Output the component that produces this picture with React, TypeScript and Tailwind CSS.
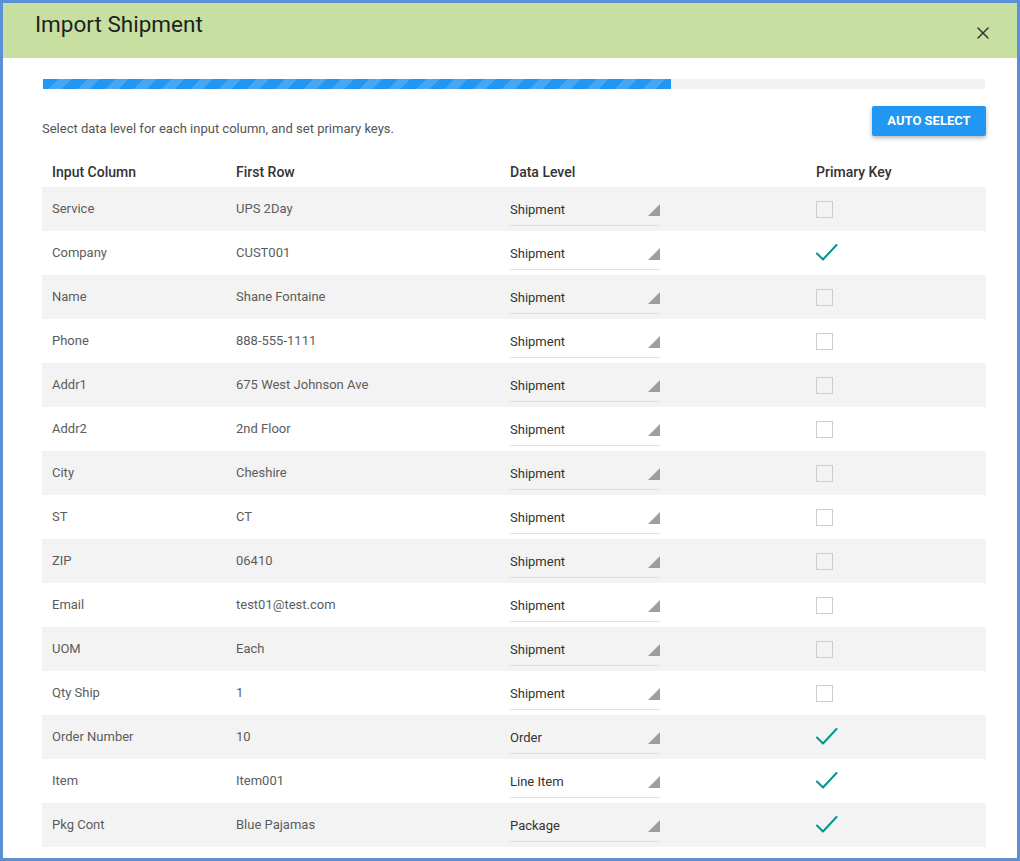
import { X } from "lucide-react";

const rows = [
  { col: "Service", first: "UPS 2Day", level: "Shipment", key: false },
  { col: "Company", first: "CUST001", level: "Shipment", key: true },
  { col: "Name", first: "Shane Fontaine", level: "Shipment", key: false },
  { col: "Phone", first: "888-555-1111", level: "Shipment", key: false },
  { col: "Addr1", first: "675 West Johnson Ave", level: "Shipment", key: false },
  { col: "Addr2", first: "2nd Floor", level: "Shipment", key: false },
  { col: "City", first: "Cheshire", level: "Shipment", key: false },
  { col: "ST", first: "CT", level: "Shipment", key: false },
  { col: "ZIP", first: "06410", level: "Shipment", key: false },
  { col: "Email", first: "test01@test.com", level: "Shipment", key: false },
  { col: "UOM", first: "Each", level: "Shipment", key: false },
  { col: "Qty Ship", first: "1", level: "Shipment", key: false },
  { col: "Order Number", first: "10", level: "Order", key: true },
  { col: "Item", first: "Item001", level: "Line Item", key: true },
  { col: "Pkg Cont", first: "Blue Pajamas", level: "Package", key: true },
];

function Check() {
  return (
    <svg width="22" height="20" viewBox="0 0 22 20" fill="none">
      <path d="M1 10.5 L7 16.5 L20.5 2" stroke="#00968a" strokeWidth="2" strokeLinecap="round" strokeLinejoin="round" />
    </svg>
  );
}

export default function App() {
  return (
    <div className="w-[1020px] h-[861px] border-[3px] border-[#5b8fd6] bg-white overflow-hidden font-['Roboto',sans-serif]">
      {/* Header */}
      <div className="h-[55px] bg-[#c7dfa0] flex items-start justify-between pl-[32px] pr-[24px]">
        <h1 className="text-[22.5px] leading-[28px] mt-[7px] text-[#1f1f1f]">Import Shipment</h1>
        <X size={20} strokeWidth={1.8} className="mt-[20px] text-[#333]" />
      </div>

      <div className="pl-[39px] pr-[31px]">
        {/* Progress */}
        <div className="mt-[21px] ml-[1px] mr-[1px] h-[10px] bg-[#f2f2f2]">
          <div className="h-full w-[628px] bg-[repeating-linear-gradient(-45deg,#2196f3_0px,#2196f3_11px,#45a6f4_11px,#45a6f4_20px)]" />
        </div>

        <div className="mt-[17px] flex items-end justify-between">
          <p className="text-[13px] leading-[16px] mb-[-1px] text-[#555]">
            Select data level for each input column, and set primary keys.
          </p>
          <button className="h-[30px] w-[114px] bg-[#2196f3] text-white text-[13px] font-bold rounded-[2px] shadow-[0_2px_4px_rgba(0,0,0,0.3)]">
            AUTO SELECT
          </button>
        </div>

        {/* Table */}
        <div className="mt-[19px]">
          <div className="grid grid-cols-[184px_274px_306px_1fr] h-[32px] pt-[3px] items-center text-[14px] font-medium text-[#333]">
            <div className="pl-[10px]">Input Column</div>
            <div className="pl-[10px]">First Row</div>
            <div className="pl-[10px]">Data Level</div>
            <div className="pl-[10px]">Primary Key</div>
          </div>
          {rows.map((r, i) => (
            <div
              key={r.col}
              className={`grid grid-cols-[184px_274px_306px_1fr] h-[44px] items-center text-[13px] text-[#5c5c5c] ${
                i % 2 === 0 ? "bg-[#f3f3f3]" : "bg-white"
              }`}
            >
              <div className="pl-[10px]">{r.col}</div>
              <div className="pl-[10px]">{r.first}</div>
              <div className="pl-[10px] pt-[1px]">
                <div className="relative w-[150px] h-[32px] border-b border-[#e0e0e0] flex items-center pt-[2px] text-[#333]">
                  {r.level}
                  <span className="absolute right-0 bottom-[9px] w-0 h-0 border-l-[12px] border-l-transparent border-b-[12px] border-b-[#9e9e9e]" />
                </div>
              </div>
              <div className="pl-[10px] flex items-center">
                {r.key ? (
                  <Check />
                ) : (
                  <div className={`w-[17px] h-[17px] border border-[#cccccc] ${i % 2 === 0 ? "bg-[#f3f3f3]" : "bg-white"}`} />
                )}
              </div>
            </div>
          ))}
        </div>
      </div>
    </div>
  );
}
